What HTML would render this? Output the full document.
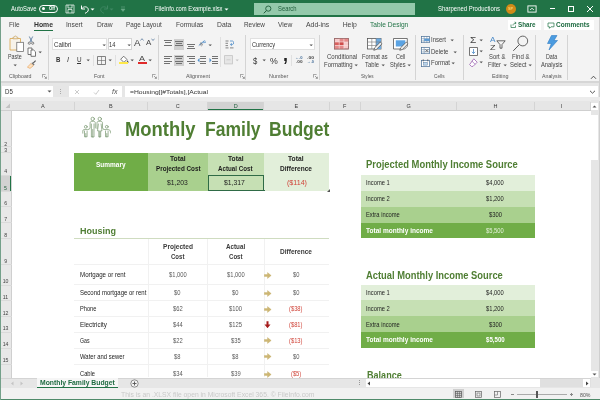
<!DOCTYPE html><html><head><meta charset="utf-8"><title>Excel</title><style>
html,body{margin:0;padding:0;}body{width:600px;height:400px;position:relative;overflow:hidden;background:#fff;font-family:"Liberation Sans", sans-serif;}
#r{position:absolute;left:0;top:0;width:600px;height:400px;overflow:hidden;will-change:transform;}
#r div,#r svg,#r span{position:absolute;}
#r span{white-space:nowrap;transform-origin:0 50%;line-height:12px;height:12px;}
</style></head><body><div id="r">
<div style="left:0px;top:0px;width:600px;height:17px;background:#217346;"></div>
<div style="left:0px;top:17px;width:600px;height:63.5px;background:#f3f3f3;"></div>
<div style="left:0px;top:80.5px;width:600px;height:2.0px;background:#d6d6d6;"></div>
<div style="left:0px;top:82.5px;width:600px;height:27.5px;background:#e6e6e6;"></div>
<div style="left:0px;top:110px;width:600px;height:267.5px;background:#fff;"></div>
<div style="left:0px;top:110px;width:11.5px;height:267.5px;background:#e8e8e8;"></div>
<div style="left:0px;top:377.5px;width:600px;height:10.5px;background:#e6e6e6;"></div>
<div style="left:0px;top:388px;width:600px;height:12px;background:#f1f1f1;"></div>
<div style="left:0px;top:17px;width:1px;height:383px;background:#74a08a;"></div>
<div style="left:599px;top:17px;width:1px;height:383px;background:#cfcfcf;"></div>
<div style="left:0px;top:399px;width:600px;height:1px;background:#4f8a6a;"></div>
<span style="left:11px;top:3px;font-size:6.5px;color:#fff;font-weight:400;transform:scaleX(0.9047);">AutoSave</span>
<div style="left:39px;top:4.5px;width:18.5px;height:8px;border:0.8px solid #fff;border-radius:5px;box-sizing:border-box"></div>
<div style="left:41.5px;top:6.8px;width:3.4px;height:3.4px;background:#fff;border-radius:50%"></div>
<span style="left:48.5px;top:2.6px;font-size:4.8px;color:#fff;font-weight:700;transform:scaleX(0.8649);">Off</span>
<svg style="left:65px;top:4px;" width="10" height="10" viewBox="0 0 10 10"><path d="M1 1h8v8h-8z M3 1v3h4v-3 M3 9v-3.5h4v3.500" fill="none" stroke="#fff" stroke-width="0.700"/></svg>
<svg style="left:80px;top:4px;" width="10" height="10" viewBox="0 0 10 10"><path d="M1.5 1.500v3.500h3.500 M1.8 4.800c1.500-3 6.500-2.500 6.500 1c0 1.800-1.500 2.700-3.300 3.500" fill="none" stroke="#fff" stroke-width="1"/></svg>
<svg style="left:90px;top:7.5px;" width="5" height="3" viewBox="0 0 5 3"><path d="M0.500 0.500l2 2l2-2z" fill="#fff"/></svg>
<svg style="left:99px;top:4px;" width="10" height="10" viewBox="0 0 10 10"><path d="M8.500 1.500v3.500h-3.500 M8.200 4.800c-1.500-3-6.500-2.500-6.500 1c0 1.800 1.500 2.700 3.300 3.500" fill="none" stroke="#3f8762" stroke-width="1"/></svg>
<svg style="left:109px;top:7.5px;" width="5" height="3" viewBox="0 0 5 3"><path d="M0.500 0.500l2 2l2-2z" fill="#3f8762"/></svg>
<svg style="left:120px;top:5.5px;" width="6" height="6" viewBox="0 0 6 6"><path d="M1 1h4 M1 3h4l-2 2.500z" fill="#6aa888" stroke="#6aa888" stroke-width="0.600"/></svg>
<span style="left:154.5px;top:3px;font-size:6.5px;color:#fff;font-weight:400;transform:scaleX(0.8940);">FileInfo.com Example.xlsx</span>
<svg style="left:223.5px;top:7.5px;" width="5" height="3" viewBox="0 0 5 3"><path d="M0.500 0.500l2 2l2-2z" fill="#fff"/></svg>
<div style="left:254px;top:3px;width:161px;height:11.5px;background:#94c9ab;"></div>
<svg style="left:262.5px;top:4.5px;" width="9" height="9" viewBox="0 0 9 9"><circle cx="5.300" cy="3.600" r="2.600" fill="none" stroke="#1e5c3a" stroke-width="0.900"/><path d="M3.500 5.500l-2.700 2.800" stroke="#1e5c3a" stroke-width="1"/></svg>
<span style="left:278px;top:3px;font-size:6.5px;color:#1e5c3a;font-weight:400;transform:scaleX(0.8976);">Search</span>
<span style="left:438px;top:3px;font-size:6.5px;color:#fff;font-weight:400;transform:scaleX(0.9126);">Sharpened Productions</span>
<div style="left:505.5px;top:3.6px;width:10px;height:10px;border-radius:50%;background:#cf8a17"></div>
<span style="left:508px;top:2.7px;font-size:3.8px;color:#f7d56a;font-weight:700;transform:scaleX(0.9846);">SP</span>
<svg style="left:527px;top:4.5px;" width="10" height="8" viewBox="0 0 10 8"><rect x="0.900" y="0.900" width="8.200" height="6.200" fill="none" stroke="#fff" stroke-width="0.900"/><path d="M3.200 5l1.800-1.800l1.800 1.800" fill="none" stroke="#fff" stroke-width="0.900"/></svg>
<div style="left:549.5px;top:8.2px;width:5.5px;height:0.9px;background:#fff;"></div>
<div style="left:567.500px;top:5.800px;width:6px;height:5.800px;border:0.800px solid #fff;box-sizing:border-box"></div>
<svg style="left:586px;top:5px;" width="8" height="8" viewBox="0 0 8 8"><path d="M1 1l6 6M7 1l-6 6" stroke="#fff" stroke-width="1"/></svg>
<span style="left:9px;top:19.2px;font-size:6.8px;color:#444;font-weight:400;transform:scaleX(0.9586);">File</span>
<span style="left:66px;top:19.2px;font-size:6.8px;color:#444;font-weight:400;transform:scaleX(0.9824);">Insert</span>
<span style="left:96.7px;top:19.2px;font-size:6.8px;color:#444;font-weight:400;transform:scaleX(0.9827);">Draw</span>
<span style="left:126px;top:19.2px;font-size:6.8px;color:#444;font-weight:400;transform:scaleX(0.9352);">Page Layout</span>
<span style="left:176px;top:19.2px;font-size:6.8px;color:#444;font-weight:400;transform:scaleX(0.9637);">Formulas</span>
<span style="left:216.7px;top:19.2px;font-size:6.8px;color:#444;font-weight:400;transform:scaleX(0.9959);">Data</span>
<span style="left:244px;top:19.2px;font-size:6.8px;color:#444;font-weight:400;transform:scaleX(0.9418);">Review</span>
<span style="left:278.3px;top:19.2px;font-size:6.8px;color:#444;font-weight:400;transform:scaleX(0.9857);">View</span>
<span style="left:306px;top:19.2px;font-size:6.8px;color:#444;font-weight:400;transform:scaleX(1.0110);">Add-ins</span>
<span style="left:342.7px;top:19.2px;font-size:6.8px;color:#444;font-weight:400;">Help</span>
<span style="left:34px;top:19.2px;font-size:6.8px;color:#333;font-weight:700;transform:scaleX(1.0058);">Home</span>
<div style="left:34px;top:30px;width:19px;height:1.3px;background:#217346;"></div>
<span style="left:370px;top:19.2px;font-size:6.8px;color:#217346;font-weight:400;transform:scaleX(0.9746);">Table Design</span>
<div style="left:507.5px;top:19.5px;width:33.0px;height:10.5px;background:#fff;"></div>
<div style="left:543.5px;top:19.5px;width:50.5px;height:10.5px;background:#fff;"></div>
<svg style="left:509.5px;top:21px;" width="7" height="7" viewBox="0 0 7 7"><path d="M1 3.500v3h4.500v-2 M3 4.500c0-2 1.500-2.500 3-2.500 M4.800 0.800l1.400 1.200l-1.400 1.200" fill="none" stroke="#217346" stroke-width="0.700"/></svg>
<span style="left:518px;top:19px;font-size:6.8px;color:#1e6b41;font-weight:700;transform:scaleX(0.9264);">Share</span>
<svg style="left:546.5px;top:21.5px;" width="8" height="7" viewBox="0 0 8 7"><path d="M1 1h6v3.800h-3l-1.500 1.500v-1.500h-1.500z" fill="none" stroke="#217346" stroke-width="0.700"/></svg>
<span style="left:556px;top:19px;font-size:6.8px;color:#1e6b41;font-weight:700;transform:scaleX(0.9537);">Comments</span>
<div style="left:2px;top:86.4px;width:51.4px;height:10.2px;background:#fff;"></div>
<span style="left:4.5px;top:85.6px;font-size:6.6px;color:#333;font-weight:400;transform:scaleX(0.9244);">D5</span>
<svg style="left:46.5px;top:90px;" width="5" height="3" viewBox="0 0 5 3"><path d="M0.500 0.500l2 2l2-2z" fill="#555"/></svg>
<div style="left:60.3px;top:89px;width:0.8px;height:0.8px;background:#aaa;"></div>
<div style="left:60.3px;top:91px;width:0.8px;height:0.8px;background:#aaa;"></div>
<div style="left:60.3px;top:93px;width:0.8px;height:0.8px;background:#aaa;"></div>
<div style="left:69px;top:86.4px;width:53px;height:10.2px;background:#fff;"></div>
<svg style="left:74px;top:88.5px;" width="6" height="6" viewBox="0 0 6 6"><path d="M1 1l4 4M5 1l-4 4" stroke="#b5b5b5" stroke-width="0.700"/></svg>
<svg style="left:92.5px;top:88.5px;" width="7" height="6" viewBox="0 0 7 6"><path d="M1 3.500l1.800 1.800l3.200-4.300" fill="none" stroke="#b5b5b5" stroke-width="0.700"/></svg>
<span style="left:111.5px;top:85.5px;font-size:6.5px;color:#555;font-weight:400;transform:scaleX(1.0864);font-style:italic;font-family:"Liberation Serif",serif;">fx</span>
<div style="left:125px;top:86.4px;width:473px;height:10.2px;background:#fff;"></div>
<span style="left:130px;top:85.6px;font-size:6.2px;color:#333;font-weight:400;transform:scaleX(1.0876);">=Housing[[#Totals],[Actual</span>
<svg style="left:588.5px;top:89.5px;" width="7" height="4" viewBox="0 0 7 4"><path d="M1 0.800l2.500 2.400l2.500-2.400" fill="none" stroke="#444" stroke-width="0.900"/></svg>
<div style="left:0px;top:96.6px;width:600px;height:4.7px;background:#ececec;"></div>
<div style="left:207.5px;top:101.5px;width:56.0px;height:8.5px;background:#d2d2d2;"></div>
<div style="left:207.5px;top:108.7px;width:56.0px;height:1.3px;background:#217346;"></div>
<span style="left:41.05px;top:100px;font-size:5.5px;color:#3a3a3a;font-weight:400;">A</span>
<div style="left:73.7px;top:102px;width:0.6px;height:7.5px;background:#d4d4d4;"></div>
<span style="left:109.05px;top:100px;font-size:5.5px;color:#3a3a3a;font-weight:400;">B</span>
<div style="left:147.2px;top:102px;width:0.6px;height:7.5px;background:#d4d4d4;"></div>
<span style="left:175.8px;top:100px;font-size:5.5px;color:#3a3a3a;font-weight:400;">C</span>
<div style="left:207.2px;top:102px;width:0.6px;height:7.5px;background:#d4d4d4;"></div>
<span style="left:233.8px;top:100px;font-size:5.5px;color:#1e5c3a;font-weight:400;">D</span>
<div style="left:263.2px;top:102px;width:0.6px;height:7.5px;background:#d4d4d4;"></div>
<span style="left:294.45px;top:100px;font-size:5.5px;color:#3a3a3a;font-weight:400;">E</span>
<div style="left:328.5px;top:102px;width:0.6px;height:7.5px;background:#d4d4d4;"></div>
<span style="left:342.95px;top:100px;font-size:5.5px;color:#3a3a3a;font-weight:400;">F</span>
<div style="left:360.2px;top:102px;width:0.6px;height:7.5px;background:#d4d4d4;"></div>
<span style="left:406.55px;top:100px;font-size:5.5px;color:#3a3a3a;font-weight:400;">G</span>
<div style="left:455.7px;top:102px;width:0.6px;height:7.5px;background:#d4d4d4;"></div>
<span style="left:493.55px;top:100px;font-size:5.5px;color:#3a3a3a;font-weight:400;">H</span>
<div style="left:534.2px;top:102px;width:0.6px;height:7.5px;background:#d4d4d4;"></div>
<span style="left:560.8px;top:100px;font-size:5.5px;color:#3a3a3a;font-weight:400;">I</span>
<div style="left:590.2px;top:102px;width:0.6px;height:7.5px;background:#d4d4d4;"></div>
<svg style="left:5px;top:103px;" width="6" height="6" viewBox="0 0 6 6"><path d="M5 0.500v4.500h-4.500z" fill="#c2c2c2"/></svg>
<div style="left:0px;top:109.6px;width:590.5px;height:0.6px;background:#cfcfcf;"></div>
<div style="left:11.2px;top:110px;width:0.6px;height:267.5px;background:#cfcfcf;"></div>
<span style="left:4.1499999999999995px;top:137.8px;font-size:5.2px;color:#444;font-weight:400;">2</span>
<span style="left:4.1499999999999995px;top:143.8px;font-size:5.2px;color:#444;font-weight:400;">3</span>
<span style="left:4.1499999999999995px;top:165px;font-size:5.2px;color:#444;font-weight:400;">4</span>
<span style="left:4.1499999999999995px;top:197.3px;font-size:5.2px;color:#444;font-weight:400;">6</span>
<span style="left:4.1499999999999995px;top:212.5px;font-size:5.2px;color:#444;font-weight:400;">7</span>
<span style="left:4.1499999999999995px;top:229px;font-size:5.2px;color:#444;font-weight:400;">8</span>
<span style="left:4.1499999999999995px;top:254.7px;font-size:5.2px;color:#444;font-weight:400;">9</span>
<span style="left:2.6999999999999997px;top:275px;font-size:5.2px;color:#444;font-weight:400;">10</span>
<span style="left:2.6999999999999997px;top:291px;font-size:5.2px;color:#444;font-weight:400;">11</span>
<span style="left:2.6999999999999997px;top:306.5px;font-size:5.2px;color:#444;font-weight:400;">12</span>
<span style="left:2.6999999999999997px;top:322.3px;font-size:5.2px;color:#444;font-weight:400;">13</span>
<span style="left:2.6999999999999997px;top:338px;font-size:5.2px;color:#444;font-weight:400;">14</span>
<span style="left:2.6999999999999997px;top:354px;font-size:5.2px;color:#444;font-weight:400;">15</span>
<div style="left:1px;top:175px;width:10.5px;height:16px;background:#d2d2d2;"></div>
<div style="left:10.4px;top:175px;width:1.1px;height:16px;background:#217346;"></div>
<span style="left:4.1px;top:181.5px;font-size:5.2px;color:#1e5c3a;font-weight:400;">5</span>
<div style="left:1px;top:145.75px;width:10.5px;height:0.5px;background:#dadada;"></div>
<div style="left:1px;top:152.25px;width:10.5px;height:0.5px;background:#dadada;"></div>
<div style="left:1px;top:174.75px;width:10.5px;height:0.5px;background:#dadada;"></div>
<div style="left:1px;top:190.75px;width:10.5px;height:0.5px;background:#dadada;"></div>
<div style="left:1px;top:206.25px;width:10.5px;height:0.5px;background:#dadada;"></div>
<div style="left:1px;top:221.75px;width:10.5px;height:0.5px;background:#dadada;"></div>
<div style="left:1px;top:238.25px;width:10.5px;height:0.5px;background:#dadada;"></div>
<div style="left:1px;top:263.75px;width:10.5px;height:0.5px;background:#dadada;"></div>
<div style="left:1px;top:284.75px;width:10.5px;height:0.5px;background:#dadada;"></div>
<div style="left:1px;top:300.45px;width:10.5px;height:0.5px;background:#dadada;"></div>
<div style="left:1px;top:316.25px;width:10.5px;height:0.5px;background:#dadada;"></div>
<div style="left:1px;top:332.25px;width:10.5px;height:0.5px;background:#dadada;"></div>
<div style="left:1px;top:348.05px;width:10.5px;height:0.5px;background:#dadada;"></div>
<div style="left:1px;top:364.05px;width:10.5px;height:0.5px;background:#dadada;"></div>
<div style="left:590.5px;top:100px;width:8.0px;height:277.5px;background:#e6e6e6;"></div>
<div style="left:591px;top:115px;width:6.7px;height:45px;background:#fff;"></div>
<div style="left:591px;top:103px;width:6.7px;height:6.6px;background:#fff;"></div>
<svg style="left:592.3px;top:104.8px;" width="5" height="3" viewBox="0 0 5 3"><path d="M0.500 2.500l2-2l2 2z" fill="#555"/></svg>
<div style="left:591px;top:370.5px;width:6.7px;height:6.5px;background:#fff;"></div>
<svg style="left:592.3px;top:372.5px;" width="5" height="3" viewBox="0 0 5 3"><path d="M0.500 0.500l2 2l2-2z" fill="#555"/></svg>
<span style="left:124.7px;top:122.8px;font-size:20.6px;color:#4f7e33;font-weight:700;transform:scaleX(0.8944);">Monthly</span>
<span style="left:205.3px;top:122.8px;font-size:20.6px;color:#4f7e33;font-weight:700;transform:scaleX(0.8506);">Family</span>
<span style="left:268.6px;top:122.8px;font-size:20.6px;color:#4f7e33;font-weight:700;transform:scaleX(0.8516);">Budget</span>
<svg style="left:82px;top:115.5px;" width="29" height="22" viewBox="0 0 29 22"><g fill="none" stroke="#6a8c62" stroke-width="0.650" stroke-linecap="round" stroke-linejoin="round">
<circle cx="10.700" cy="2.900" r="1.700"/><path d="M7.200 13.200l0.900-1.200v-4.800c0-1.300 0.700-1.900 1.900-1.900h1.400c1.200 0 1.900 0.600 1.900 1.900v4.800 M9.400 8v13h1.300v-7.500 M12 8v13h-1.300"/>
<circle cx="17.750" cy="2.900" r="1.700"/><path d="M15 12.500v-5.300c0-1.300 0.600-1.900 1.800-1.900h1.900c1.200 0 1.800 0.600 1.800 1.900v4.800l0.900 1.200 M16.400 8l-0.900 6.800h1.300v6.200h0.950v-6 M19.100 8l0.900 6.800h-1.300v6.200h-0.950"/>
<circle cx="3.800" cy="10.800" r="1.400"/><path d="M6.900 13.200l-1.200 0.400h-3.600c-0.900 0-1.300 0.500-1.300 1.300v2.300 M2.500 15v5.800h1.300v-3.300 M5.100 15v5.800h-1.300"/>
<circle cx="24.800" cy="10.800" r="1.400"/><path d="M21.700 13.200l1.200 0.400h3.600c0.900 0 1.400 0.500 1.700 1.300l0.700 2.300 M23.500 15v5.800h1.300v-3.300 M26.100 15v5.800h-1.300"/>
</g></svg>
<div style="left:73.8px;top:153.2px;width:74.2px;height:37.6px;background:#70ad47;"></div>
<div style="left:147.5px;top:153.2px;width:60.0px;height:37.6px;background:#a9d08e;"></div>
<div style="left:207.5px;top:153.2px;width:56.3px;height:37.6px;background:#c6e0b4;"></div>
<div style="left:263.8px;top:153.2px;width:65.2px;height:37.6px;background:#e2efda;"></div>
<span style="left:95.8px;top:158.9px;font-size:7.2px;color:#fff;font-weight:700;transform:scaleX(0.9034);">Summary</span>
<span style="left:169.8px;top:153.3px;font-size:7.2px;color:#1c1c1c;font-weight:700;transform:scaleX(0.9315);">Total</span>
<span style="left:155.5px;top:163px;font-size:7.2px;color:#1c1c1c;font-weight:700;transform:scaleX(0.8771);">Projected Cost</span>
<span style="left:166.5px;top:177.4px;font-size:7.4px;color:#222;font-weight:400;transform:scaleX(0.9200);">$1,203</span>
<span style="left:227.5px;top:153.3px;font-size:7.2px;color:#1c1c1c;font-weight:700;transform:scaleX(0.9315);">Total</span>
<span style="left:218px;top:163px;font-size:7.2px;color:#1c1c1c;font-weight:700;transform:scaleX(0.8638);">Actual Cost</span>
<span style="left:224.3px;top:177.4px;font-size:7.4px;color:#222;font-weight:400;transform:scaleX(0.9244);">$1,317</span>
<span style="left:287.8px;top:153.3px;font-size:7.2px;color:#1c1c1c;font-weight:700;transform:scaleX(0.9315);">Total</span>
<span style="left:280px;top:163px;font-size:7.2px;color:#1c1c1c;font-weight:700;transform:scaleX(0.9102);">Difference</span>
<span style="left:286.5px;top:177.4px;font-size:7.4px;color:#d0453a;font-weight:400;transform:scaleX(0.9602);">($114)</span>
<div style="left:207.500px;top:175px;width:56.500px;height:16px;border:1px solid #2f6b46;box-sizing:border-box"></div>
<div style="left:262.8px;top:189.7px;width:1.8px;height:1.8px;background:#2f6b46;"></div>
<svg style="left:326.5px;top:188.5px;" width="3" height="3" viewBox="0 0 3 3"><path d="M3 0v3h-3z" fill="#555"/></svg>
<span style="left:80px;top:225px;font-size:9.8px;color:#4f7e33;font-weight:700;transform:scaleX(0.9187);">Housing</span>
<div style="left:74px;top:237.8px;width:255px;height:0.9px;background:#cfdcc0;"></div>
<span style="left:162.5px;top:241.3px;font-size:6.8px;color:#3a3a3a;font-weight:700;transform:scaleX(0.9682);">Projected</span>
<span style="left:170.8px;top:250.7px;font-size:6.8px;color:#3a3a3a;font-weight:700;transform:scaleX(0.8869);">Cost</span>
<span style="left:225.8px;top:241.3px;font-size:6.8px;color:#3a3a3a;font-weight:700;transform:scaleX(0.9239);">Actual</span>
<span style="left:229px;top:250.7px;font-size:6.8px;color:#3a3a3a;font-weight:700;transform:scaleX(0.8935);">Cost</span>
<span style="left:280px;top:245.8px;font-size:6.8px;color:#3a3a3a;font-weight:700;transform:scaleX(0.9624);">Difference</span>
<div style="left:74px;top:263.9px;width:255px;height:0.6px;background:#f1f1f1;"></div>
<div style="left:74px;top:284.3px;width:255px;height:0.6px;background:#f1f1f1;"></div>
<div style="left:74px;top:300.0px;width:255px;height:0.6px;background:#f1f1f1;"></div>
<div style="left:74px;top:316.0px;width:255px;height:0.6px;background:#f1f1f1;"></div>
<div style="left:74px;top:332.0px;width:255px;height:0.6px;background:#f1f1f1;"></div>
<div style="left:74px;top:348.0px;width:255px;height:0.6px;background:#f1f1f1;"></div>
<div style="left:74px;top:364.0px;width:255px;height:0.6px;background:#f1f1f1;"></div>
<div style="left:147.5px;top:238.7px;width:0.6px;height:138.8px;background:#f1f1f1;"></div>
<div style="left:207.0px;top:238.7px;width:0.6px;height:138.8px;background:#f1f1f1;"></div>
<div style="left:263.5px;top:238.7px;width:0.6px;height:138.8px;background:#f1f1f1;"></div>
<span style="left:79.5px;top:269px;font-size:6.7px;color:#222;font-weight:400;transform:scaleX(0.9201);">Mortgage or rent</span>
<span style="left:168.75px;top:269px;font-size:6.7px;color:#5a5a5a;font-weight:400;transform:scaleX(0.8647);">$1,000</span>
<span style="left:226.55px;top:269px;font-size:6.7px;color:#5a5a5a;font-weight:400;transform:scaleX(0.8647);">$1,000</span>
<span style="left:292.575px;top:269px;font-size:6.7px;color:#5a5a5a;font-weight:400;transform:scaleX(0.8654);">$0</span>
<svg style="left:264.3px;top:271.5px;" width="7.5" height="7" viewBox="0 0 7.5 7"><path d="M0.300 2.500h3.200v-2l3.700 3l-3.700 3v-2h-3.200z" fill="#cdb673" stroke="#bfa55c" stroke-width="0.300"/></svg>
<span style="left:79.5px;top:287px;font-size:6.7px;color:#222;font-weight:400;transform:scaleX(0.8961);">Second mortgage or rent</span>
<span style="left:174.375px;top:287px;font-size:6.7px;color:#5a5a5a;font-weight:400;transform:scaleX(0.8654);">$0</span>
<span style="left:232.175px;top:287px;font-size:6.7px;color:#5a5a5a;font-weight:400;transform:scaleX(0.8654);">$0</span>
<span style="left:292.575px;top:287px;font-size:6.7px;color:#5a5a5a;font-weight:400;transform:scaleX(0.8654);">$0</span>
<svg style="left:264.3px;top:289.5px;" width="7.5" height="7" viewBox="0 0 7.5 7"><path d="M0.300 2.500h3.200v-2l3.700 3l-3.700 3v-2h-3.200z" fill="#cdb673" stroke="#bfa55c" stroke-width="0.300"/></svg>
<span style="left:79.5px;top:303px;font-size:6.7px;color:#222;font-weight:400;transform:scaleX(0.8426);">Phone</span>
<span style="left:172.75px;top:303px;font-size:6.7px;color:#5a5a5a;font-weight:400;transform:scaleX(0.8683);">$62</span>
<span style="left:228.925px;top:303px;font-size:6.7px;color:#5a5a5a;font-weight:400;transform:scaleX(0.8697);">$100</span>
<span style="left:289.05px;top:303px;font-size:6.7px;color:#d0453a;font-weight:400;transform:scaleX(0.8640);">($38)</span>
<svg style="left:264.3px;top:305.5px;" width="7.5" height="7" viewBox="0 0 7.5 7"><path d="M0.300 2.500h3.200v-2l3.700 3l-3.700 3v-2h-3.200z" fill="#cdb673" stroke="#bfa55c" stroke-width="0.300"/></svg>
<span style="left:79.5px;top:318.7px;font-size:6.7px;color:#222;font-weight:400;transform:scaleX(0.9432);">Electricity</span>
<span style="left:172.75px;top:318.7px;font-size:6.7px;color:#5a5a5a;font-weight:400;transform:scaleX(0.8683);">$44</span>
<span style="left:228.925px;top:318.7px;font-size:6.7px;color:#5a5a5a;font-weight:400;transform:scaleX(0.8697);">$125</span>
<span style="left:289.05px;top:318.7px;font-size:6.7px;color:#d0453a;font-weight:400;transform:scaleX(0.8640);">($81)</span>
<svg style="left:264.3px;top:321.2px;" width="7.5" height="7" viewBox="0 0 7.5 7"><path d="M2.500 0.300v3.200h-2l3 3.700l3-3.700h-2v-3.200z" fill="#a61c1c"/></svg>
<span style="left:79.5px;top:334.5px;font-size:6.7px;color:#222;font-weight:400;transform:scaleX(0.7745);">Gas</span>
<span style="left:172.75px;top:334.5px;font-size:6.7px;color:#5a5a5a;font-weight:400;transform:scaleX(0.8683);">$22</span>
<span style="left:230.55px;top:334.5px;font-size:6.7px;color:#5a5a5a;font-weight:400;transform:scaleX(0.8683);">$35</span>
<span style="left:289.05px;top:334.5px;font-size:6.7px;color:#d0453a;font-weight:400;transform:scaleX(0.8640);">($13)</span>
<svg style="left:264.3px;top:337.0px;" width="7.5" height="7" viewBox="0 0 7.5 7"><path d="M0.300 2.500h3.200v-2l3.700 3l-3.700 3v-2h-3.200z" fill="#cdb673" stroke="#bfa55c" stroke-width="0.300"/></svg>
<span style="left:79.5px;top:350.6px;font-size:6.7px;color:#222;font-weight:400;transform:scaleX(0.8845);">Water and sewer</span>
<span style="left:174.375px;top:350.6px;font-size:6.7px;color:#5a5a5a;font-weight:400;transform:scaleX(0.8654);">$8</span>
<span style="left:232.175px;top:350.6px;font-size:6.7px;color:#5a5a5a;font-weight:400;transform:scaleX(0.8654);">$8</span>
<span style="left:292.575px;top:350.6px;font-size:6.7px;color:#5a5a5a;font-weight:400;transform:scaleX(0.8654);">$0</span>
<svg style="left:264.3px;top:353.1px;" width="7.5" height="7" viewBox="0 0 7.5 7"><path d="M0.300 2.500h3.200v-2l3.700 3l-3.700 3v-2h-3.200z" fill="#cdb673" stroke="#bfa55c" stroke-width="0.300"/></svg>
<span style="left:79.5px;top:368.2px;font-size:6.7px;color:#222;font-weight:400;transform:scaleX(0.8579);">Cable</span>
<span style="left:172.75px;top:368.2px;font-size:6.7px;color:#5a5a5a;font-weight:400;transform:scaleX(0.8683);">$34</span>
<span style="left:230.55px;top:368.2px;font-size:6.7px;color:#5a5a5a;font-weight:400;transform:scaleX(0.8683);">$39</span>
<span style="left:290.675px;top:368.2px;font-size:6.7px;color:#d0453a;font-weight:400;transform:scaleX(0.8609);">($5)</span>
<svg style="left:264.3px;top:370.7px;" width="7.5" height="7" viewBox="0 0 7.5 7"><path d="M0.300 2.500h3.200v-2l3.700 3l-3.700 3v-2h-3.200z" fill="#cdb673" stroke="#bfa55c" stroke-width="0.300"/></svg>
<span style="left:366.2px;top:157.9px;font-size:10.6px;color:#4f7e33;font-weight:700;transform:scaleX(0.8892);">Projected Monthly Income Source</span>
<div style="left:360.5px;top:175px;width:174.0px;height:16.4px;background:#e2efda;"></div>
<div style="left:360.5px;top:190.8px;width:174.0px;height:16.5px;background:#c6e0b4;"></div>
<div style="left:360.5px;top:206.7px;width:174.0px;height:16.4px;background:#a9d08e;"></div>
<div style="left:360.5px;top:222.5px;width:174.0px;height:15.8px;background:#70ad47;"></div>
<span style="left:366.2px;top:177.2px;font-size:6.7px;color:#1f1f1f;font-weight:400;transform:scaleX(0.8650);">Income 1</span>
<span style="left:486.15px;top:177.2px;font-size:6.7px;color:#1f1f1f;font-weight:400;transform:scaleX(0.8647);">$4,000</span>
<span style="left:366.2px;top:193.05px;font-size:6.7px;color:#1f1f1f;font-weight:400;transform:scaleX(0.8650);">Income 2</span>
<span style="left:486.15px;top:193.05px;font-size:6.7px;color:#1f1f1f;font-weight:400;transform:scaleX(0.8647);">$1,200</span>
<span style="left:366.2px;top:208.9px;font-size:6.7px;color:#1f1f1f;font-weight:400;transform:scaleX(0.8660);">Extra income</span>
<span style="left:488.525px;top:208.9px;font-size:6.7px;color:#1f1f1f;font-weight:400;transform:scaleX(0.8697);">$300</span>
<span style="left:366.2px;top:224.7px;font-size:7px;color:#fff;font-weight:700;transform:scaleX(0.9328);">Total monthly income</span>
<span style="left:486.15px;top:224.7px;font-size:6.7px;color:#e4f1da;font-weight:400;transform:scaleX(0.8647);">$5,500</span>
<span style="left:366.2px;top:268.9px;font-size:10.6px;color:#4f7e33;font-weight:700;transform:scaleX(0.8836);">Actual Monthly Income Source</span>
<div style="left:360.5px;top:284.6px;width:174.0px;height:16.4px;background:#e2efda;"></div>
<div style="left:360.5px;top:300.40000000000003px;width:174.0px;height:16.5px;background:#c6e0b4;"></div>
<div style="left:360.5px;top:316.3px;width:174.0px;height:16.4px;background:#a9d08e;"></div>
<div style="left:360.5px;top:332.1px;width:174.0px;height:15.8px;background:#70ad47;"></div>
<span style="left:366.2px;top:286.8px;font-size:6.7px;color:#1f1f1f;font-weight:400;transform:scaleX(0.8650);">Income 1</span>
<span style="left:486.15px;top:286.8px;font-size:6.7px;color:#1f1f1f;font-weight:400;transform:scaleX(0.8647);">$4,000</span>
<span style="left:366.2px;top:302.65px;font-size:6.7px;color:#1f1f1f;font-weight:400;transform:scaleX(0.8650);">Income 2</span>
<span style="left:486.15px;top:302.65px;font-size:6.7px;color:#1f1f1f;font-weight:400;transform:scaleX(0.8647);">$1,200</span>
<span style="left:366.2px;top:318.5px;font-size:6.7px;color:#1f1f1f;font-weight:400;transform:scaleX(0.8660);">Extra income</span>
<span style="left:488.525px;top:318.5px;font-size:6.7px;color:#1f1f1f;font-weight:400;transform:scaleX(0.8697);">$300</span>
<span style="left:366.2px;top:334.3px;font-size:7px;color:#fff;font-weight:700;transform:scaleX(0.9328);">Total monthly income</span>
<span style="left:485.65px;top:334.3px;font-size:6.7px;color:#fff;font-weight:700;transform:scaleX(0.9136);">$5,500</span>
<span style="left:367px;top:369.2px;font-size:10.6px;color:#4f7e33;font-weight:700;transform:scaleX(0.8563);">Balance</span>
<div style="left:0px;top:377.8px;width:600px;height:10.5px;background:#e6e6e6;"></div>
<div style="left:0px;top:377.5px;width:590.5px;height:0.6px;background:#d4d4d4;"></div>
<div style="left:36.5px;top:378.1px;width:81.0px;height:10.2px;background:#f6f6f6;"></div>
<div style="left:36.5px;top:386.8px;width:81.0px;height:1.5px;background:#217346;"></div>
<span style="left:40px;top:376.6px;font-size:6.8px;color:#1e6b41;font-weight:700;">Monthly Family Budget</span>
<svg style="left:10px;top:380.5px;" width="5" height="5" viewBox="0 0 5 5"><path d="M3.500 0.500l-2.500 2l2.500 2z" fill="#c4c4c4"/></svg>
<svg style="left:18.5px;top:380.5px;" width="5" height="5" viewBox="0 0 5 5"><path d="M1.500 0.500l2.500 2l-2.500 2z" fill="#c4c4c4"/></svg>
<svg style="left:129.5px;top:378.5px;" width="9" height="9" viewBox="0 0 9 9"><circle cx="4.500" cy="4.500" r="3.700" fill="#f3f3f3" stroke="#666" stroke-width="0.700"/><path d="M2.500 4.500h4M4.500 2.500v4" stroke="#555" stroke-width="0.900"/></svg>
<div style="left:358.6px;top:380.3px;width:0.8px;height:0.8px;background:#999;"></div>
<div style="left:358.6px;top:382.3px;width:0.8px;height:0.8px;background:#999;"></div>
<div style="left:358.6px;top:384.3px;width:0.8px;height:0.8px;background:#999;"></div>
<div style="left:365.5px;top:378.8px;width:225.0px;height:8.7px;background:#e0e0e0;"></div>
<div style="left:365.5px;top:378.8px;width:7.0px;height:8.7px;background:#fff;"></div>
<svg style="left:367px;top:380.6px;" width="4" height="5" viewBox="0 0 4 5"><path d="M3 0.500l-2.500 2l2.500 2z" fill="#444"/></svg>
<div style="left:373px;top:378.8px;width:167px;height:8.7px;background:#fff;"></div>
<div style="left:582.5px;top:378.8px;width:7.5px;height:8.7px;background:#fff;"></div>
<svg style="left:584.5px;top:380.6px;" width="4" height="5" viewBox="0 0 4 5"><path d="M1 0.500l2.500 2l-2.500 2z" fill="#444"/></svg>
<div style="left:590.5px;top:377.5px;width:8.0px;height:10.8px;background:#e6e6e6;"></div>
<div style="left:0px;top:388.3px;width:600px;height:11.7px;background:#f1f1f1;"></div>
<div style="left:0px;top:399px;width:600px;height:1px;background:#4f8a6a;"></div>
<div style="left:0px;top:17px;width:1px;height:383px;background:#74a08a;"></div>
<span style="left:120.5px;top:388.6px;font-size:6.6px;color:#c9c9c9;font-weight:400;transform:scaleX(1.0287);">This is an .XLSX file open in Microsoft Excel 365. © FileInfo.com</span>
<div style="left:452.5px;top:389.3px;width:11.0px;height:9.2px;background:#cfcfcf;"></div>
<svg style="left:454.5px;top:390.5px;" width="7" height="7" viewBox="0 0 7 7"><rect x="0.500" y="0.500" width="6" height="6" fill="none" stroke="#555" stroke-width="0.700"/><path d="M0.500 2.500h6M0.500 4.500h6M2.500 0.500v6M4.500 0.500v6" stroke="#555" stroke-width="0.500"/></svg>
<svg style="left:474.5px;top:390.5px;" width="7" height="7" viewBox="0 0 7 7"><rect x="0.500" y="0.500" width="6" height="6" fill="none" stroke="#666" stroke-width="0.700"/><rect x="2" y="2" width="3" height="3" fill="none" stroke="#666" stroke-width="0.600"/></svg>
<svg style="left:494px;top:390.5px;" width="7" height="7" viewBox="0 0 7 7"><rect x="0.500" y="0.500" width="6" height="6" fill="none" stroke="#666" stroke-width="0.700"/><path d="M0.500 4h3v-3.500" fill="none" stroke="#666" stroke-width="0.600"/></svg>
<div style="left:511px;top:394.2px;width:3px;height:0.7px;background:#888;"></div>
<div style="left:517px;top:394.3px;width:50px;height:0.5px;background:#aaa;"></div>
<div style="left:536.3px;top:391.3px;width:1.7px;height:6.5px;background:#555;"></div>
<div style="left:570px;top:394.2px;width:3.4px;height:0.7px;background:#888;"></div>
<div style="left:571.4px;top:392.8px;width:0.6px;height:3.4px;background:#888;"></div>
<span style="left:580px;top:388.6px;font-size:5.4px;color:#555;font-weight:400;transform:scaleX(0.9725);">80%</span>
<div style="left:48.15px;top:34.5px;width:0.7px;height:45.0px;background:#d4d4d4;"></div>
<div style="left:157.65px;top:34.5px;width:0.7px;height:45.0px;background:#d4d4d4;"></div>
<div style="left:245.15px;top:34.5px;width:0.7px;height:45.0px;background:#d4d4d4;"></div>
<div style="left:319.15px;top:34.5px;width:0.7px;height:45.0px;background:#d4d4d4;"></div>
<div style="left:415.15px;top:34.5px;width:0.7px;height:45.0px;background:#d4d4d4;"></div>
<div style="left:463.34999999999997px;top:34.5px;width:0.7px;height:45.0px;background:#d4d4d4;"></div>
<div style="left:534.9499999999999px;top:34.5px;width:0.7px;height:45.0px;background:#d4d4d4;"></div>
<div style="left:566.9499999999999px;top:34.5px;width:0.7px;height:45.0px;background:#d4d4d4;"></div>
<div style="left:220px;top:37px;width:0.6px;height:30px;background:#e0e0e0;"></div>
<svg style="left:8.5px;top:35px;" width="16" height="17" viewBox="0 0 16 17"><path d="M1 3.500h10.500v11.500h-10.500z" fill="#f7f3ea" stroke="#dcae5c" stroke-width="0.900"/>
<path d="M4 3.800v-1.600h1.200c0-1.600 2.400-1.600 2.400 0h1.200v1.600z" fill="#f3f3f3" stroke="#c9a25c" stroke-width="0.700"/>
<rect x="7.800" y="7.300" width="6.800" height="9.200" fill="#fff" stroke="#686868" stroke-width="0.750"/></svg>
<span style="left:8.3px;top:51px;font-size:6.4px;color:#444;font-weight:400;transform:scaleX(0.8382);">Paste</span>
<svg style="left:12.5px;top:63.8px;" width="4.4" height="2.8" viewBox="0 0 4.4 2.8"><path d="M0.500 0.500l1.700 1.700l1.700-1.700z" fill="#555"/></svg>
<svg style="left:26.5px;top:35.5px;" width="8" height="9" viewBox="0 0 8 9"><path d="M2.300 0.500l2.700 5.500 M5.700 0.500l-2.700 5.500" stroke="#4a6f96" stroke-width="0.800" fill="none"/><circle cx="2.300" cy="7.200" r="1.100" fill="none" stroke="#555" stroke-width="0.700"/><circle cx="5.700" cy="7.200" r="1.100" fill="none" stroke="#555" stroke-width="0.700"/></svg>
<svg style="left:26.5px;top:46.5px;" width="10" height="10" viewBox="0 0 10 10"><path d="M1 1h4v6.500h-4z" fill="#fff" stroke="#555" stroke-width="0.800"/><path d="M4 3h2.700l1.800 1.800v4.500h-4.500z" fill="#fff" stroke="#555" stroke-width="0.800"/></svg>
<svg style="left:37.8px;top:51.099999999999994px;" width="4.4" height="2.8" viewBox="0 0 4.4 2.8"><path d="M0.500 0.500l1.700 1.700l1.700-1.700z" fill="#555"/></svg>
<svg style="left:26.5px;top:59.5px;" width="10" height="9" viewBox="0 0 10 9"><path d="M8.600 0.600l-2.400 2.600" stroke="#555" stroke-width="1.100"/><path d="M5.300 2.300l2.300 2.300l-1 0.900l-2.300-2.300z" fill="#777"/><path d="M4 3.500l2.300 2.300l-3.300 2.600l-2.600-1.300z" fill="#fbe2c4" stroke="#e69a4c" stroke-width="0.600"/></svg>
<span style="left:9px;top:70px;font-size:6.2px;color:#555;font-weight:400;transform:scaleX(0.8496);">Clipboard</span>
<svg style="left:41.8px;top:73.7px;" width="5" height="5" viewBox="0 0 5 5"><path d="M0.400 3.600v-3.200h3.200 M2 2l2.300 2.300 M4.400 2.700v1.700h-1.700" fill="none" stroke="#666" stroke-width="0.600"/></svg>
<div style="left:52px;top:38.4px;width:55px;height:11.6px;background:#fff;border:0.600px solid #e0e0e0;box-sizing:border-box;"></div>
<div style="left:108px;top:38.4px;width:24.3px;height:11.6px;background:#fff;border:0.600px solid #d4d4d4;box-sizing:border-box;"></div>
<span style="left:54px;top:38.7px;font-size:6.4px;color:#333;font-weight:400;transform:scaleX(0.9545);">Calibri</span>
<svg style="left:101.8px;top:43.599999999999994px;" width="4.4" height="2.8" viewBox="0 0 4.4 2.8"><path d="M0.500 0.500l1.700 1.700l1.700-1.700z" fill="#555"/></svg>
<span style="left:109.3px;top:38.7px;font-size:6.4px;color:#333;font-weight:400;transform:scaleX(0.8862);">14</span>
<svg style="left:127.3px;top:43.599999999999994px;" width="4.4" height="2.8" viewBox="0 0 4.4 2.8"><path d="M0.500 0.500l1.700 1.700l1.700-1.700z" fill="#555"/></svg>
<span style="left:134px;top:36.5px;font-size:9.4px;color:#444;font-weight:400;transform:scaleX(1.0374);">A</span>
<svg style="left:140px;top:37.5px;" width="4" height="3" viewBox="0 0 4 3"><path d="M0.500 2.500l1.500-1.800l1.500 1.800" fill="none" stroke="#4a6f96" stroke-width="0.700"/></svg>
<span style="left:146px;top:37.3px;font-size:8px;color:#444;font-weight:400;transform:scaleX(0.9918);">A</span>
<svg style="left:150.5px;top:37.5px;" width="4" height="3" viewBox="0 0 4 3"><path d="M0.500 0.700l1.500 1.800l1.500-1.800" fill="none" stroke="#4a6f96" stroke-width="0.700"/></svg>
<span style="left:55.8px;top:54.3px;font-size:6.8px;color:#333;font-weight:700;transform:scaleX(0.8940);">B</span>
<span style="left:67.3px;top:54.3px;font-size:6.8px;color:#333;font-weight:400;transform:scaleX(1.0579);font-style:italic;font-family:"Liberation Serif",serif;">I</span>
<span style="left:76.8px;top:54px;font-size:6.6px;color:#333;font-weight:400;transform:scaleX(0.9652);">U</span>
<div style="left:76.8px;top:63.3px;width:4.6px;height:0.6px;background:#333;"></div>
<svg style="left:86.0px;top:59.3px;" width="4.4" height="2.8" viewBox="0 0 4.4 2.8"><path d="M0.500 0.500l1.700 1.700l1.700-1.700z" fill="#555"/></svg>
<div style="left:93px;top:55px;width:0.5px;height:11px;background:#e0e0e0;"></div>
<svg style="left:96.5px;top:55.5px;" width="9" height="9" viewBox="0 0 9 9"><rect x="0.600" y="0.600" width="7.800" height="7.800" fill="none" stroke="#666" stroke-width="0.800"/><path d="M4.500 0.600v7.800M0.600 4.500h7.800" stroke="#666" stroke-width="0.600"/></svg>
<svg style="left:108.1px;top:59.3px;" width="4.4" height="2.8" viewBox="0 0 4.4 2.8"><path d="M0.500 0.500l1.700 1.700l1.700-1.700z" fill="#555"/></svg>
<div style="left:114.5px;top:55px;width:0.5px;height:11px;background:#e0e0e0;"></div>
<svg style="left:118.5px;top:54.5px;" width="10" height="10" viewBox="0 0 10 10"><path d="M4.700 1.200l3.200 3.200l-3 3l-3.200-3.200z" fill="#fff" stroke="#555" stroke-width="0.800"/><path d="M8.600 5.300c0.600 0.900 0.900 1.400 0.900 1.900a0.900 0.900 0 0 1-1.800 0c0-0.500 0.300-1 0.900-1.900z" fill="#555"/></svg>
<div style="left:118.5px;top:62.3px;width:9.0px;height:2.0px;background:#ffe94a;"></div>
<svg style="left:129.8px;top:59.3px;" width="4.4" height="2.8" viewBox="0 0 4.4 2.8"><path d="M0.500 0.500l1.700 1.700l1.700-1.700z" fill="#555"/></svg>
<span style="left:139px;top:52.6px;font-size:8px;color:#444;font-weight:400;transform:scaleX(1.1228);">A</span>
<div style="left:138px;top:62.3px;width:8.5px;height:2.0px;background:#e02b2b;"></div>
<svg style="left:148.3px;top:59.3px;" width="4.4" height="2.8" viewBox="0 0 4.4 2.8"><path d="M0.500 0.500l1.700 1.700l1.700-1.700z" fill="#555"/></svg>
<span style="left:94px;top:70px;font-size:6.2px;color:#555;font-weight:400;transform:scaleX(0.8474);">Font</span>
<svg style="left:151.7px;top:73.7px;" width="5" height="5" viewBox="0 0 5 5"><path d="M0.400 3.600v-3.200h3.200 M2 2l2.300 2.300 M4.400 2.700v1.700h-1.700" fill="none" stroke="#666" stroke-width="0.600"/></svg>
<div style="left:173.5px;top:38.5px;width:10.8px;height:11.2px;background:#cfcfcf;"></div>
<div style="left:173.5px;top:54.5px;width:10.8px;height:11.2px;background:#cfcfcf;"></div>
<div style="left:164.0px;top:40.3px;width:8.0px;height:0.6px;background:#727272;"></div>
<div style="left:165.0px;top:42.4px;width:6.0px;height:0.6px;background:#727272;"></div>
<div style="left:164.0px;top:44.5px;width:8.0px;height:0.6px;background:#727272;"></div>
<div style="left:175.0px;top:41.0px;width:8.0px;height:0.6px;background:#727272;"></div>
<div style="left:176.0px;top:43.1px;width:6.0px;height:0.6px;background:#727272;"></div>
<div style="left:175.0px;top:45.2px;width:8.0px;height:0.6px;background:#727272;"></div>
<div style="left:186.5px;top:43.8px;width:8.0px;height:0.6px;background:#727272;"></div>
<div style="left:187.5px;top:45.9px;width:6.0px;height:0.6px;background:#727272;"></div>
<div style="left:186.5px;top:48.0px;width:8.0px;height:0.6px;background:#727272;"></div>
<div style="left:164px;top:56.3px;width:8px;height:0.6px;background:#727272;"></div>
<div style="left:164px;top:58.4px;width:5.5px;height:0.6px;background:#727272;"></div>
<div style="left:164px;top:60.5px;width:8px;height:0.6px;background:#727272;"></div>
<div style="left:164px;top:62.599999999999994px;width:5.5px;height:0.6px;background:#727272;"></div>
<div style="left:175.0px;top:56.3px;width:8.0px;height:0.6px;background:#727272;"></div>
<div style="left:176.25px;top:58.4px;width:5.5px;height:0.6px;background:#727272;"></div>
<div style="left:175.0px;top:60.5px;width:8.0px;height:0.6px;background:#727272;"></div>
<div style="left:176.25px;top:62.599999999999994px;width:5.5px;height:0.6px;background:#727272;"></div>
<div style="left:186.5px;top:56.3px;width:8.0px;height:0.6px;background:#727272;"></div>
<div style="left:189.0px;top:58.4px;width:5.5px;height:0.6px;background:#727272;"></div>
<div style="left:186.5px;top:60.5px;width:8.0px;height:0.6px;background:#727272;"></div>
<div style="left:189.0px;top:62.599999999999994px;width:5.5px;height:0.6px;background:#727272;"></div>
<svg style="left:197.5px;top:39px;" width="10" height="9" viewBox="0 0 10 9"><path d="M0.800 6.500l5.200-4.500" stroke="#4a8ac8" stroke-width="0.900"/><path d="M6.500 1.200l1 2.300l-2.500 0.200" fill="none" stroke="#4a8ac8" stroke-width="0.700"/></svg>
<span style="left:198px;top:37.5px;font-size:5.4px;color:#555;font-weight:400;transform:scaleX(0.4468);transform-origin:50% 50%;rotate:-40deg;">ab</span>
<svg style="left:207.8px;top:43.599999999999994px;" width="4.4" height="2.8" viewBox="0 0 4.4 2.8"><path d="M0.500 0.500l1.700 1.700l1.700-1.700z" fill="#555"/></svg>
<div style="left:200px;top:56.3px;width:6px;height:0.6px;background:#727272;"></div>
<div style="left:200px;top:58.4px;width:6px;height:0.6px;background:#727272;"></div>
<div style="left:200px;top:60.5px;width:6px;height:0.6px;background:#727272;"></div>
<div style="left:200px;top:62.599999999999994px;width:6px;height:0.6px;background:#727272;"></div>
<svg style="left:197px;top:56.5px;" width="3" height="7" viewBox="0 0 3 7"><path d="M2.500 1l-2 2.300l2 2.300z" fill="#4a8ac8"/></svg>
<div style="left:212px;top:56.3px;width:6px;height:0.6px;background:#727272;"></div>
<div style="left:212px;top:58.4px;width:6px;height:0.6px;background:#727272;"></div>
<div style="left:212px;top:60.5px;width:6px;height:0.6px;background:#727272;"></div>
<div style="left:212px;top:62.599999999999994px;width:6px;height:0.6px;background:#727272;"></div>
<svg style="left:208.5px;top:56.5px;" width="3" height="7" viewBox="0 0 3 7"><path d="M0.500 1l2 2.300l-2 2.300z" fill="#4a8ac8"/></svg>
<svg style="left:224.5px;top:39.5px;" width="9" height="9" viewBox="0 0 9 9"><path d="M0.500 1h3M0.500 3.300h2.500M0.500 5.600h2.500M0.500 7.900h3" stroke="#555" stroke-width="0.700"/><path d="M5 1h2.500c1.500 0 1.500 3.500 0 3.500h-1.500" fill="none" stroke="#4a8ac8" stroke-width="0.800"/><path d="M6.800 3.200l-1.500 1.300l1.500 1.300" fill="none" stroke="#4a8ac8" stroke-width="0.800"/><path d="M5 7.900h3.500" stroke="#555" stroke-width="0.700"/></svg>
<svg style="left:223.5px;top:55px;" width="9" height="10" viewBox="0 0 9 10"><rect x="0.600" y="0.600" width="7.800" height="8.300" fill="#e6e6e6" stroke="#c4c4c4" stroke-width="0.800"/><path d="M2.500 4.800h4" stroke="#c4c4c4" stroke-width="0.700"/></svg>
<svg style="left:235.3px;top:59.3px;" width="4.4" height="2.8" viewBox="0 0 4.4 2.8"><path d="M0.500 0.500l1.700 1.700l1.700-1.700z" fill="#c4c4c4"/></svg>
<span style="left:185.5px;top:70px;font-size:6.2px;color:#555;font-weight:400;transform:scaleX(0.8722);">Alignment</span>
<svg style="left:239.5px;top:73.7px;" width="5" height="5" viewBox="0 0 5 5"><path d="M0.400 3.600v-3.200h3.200 M2 2l2.300 2.300 M4.400 2.700v1.700h-1.700" fill="none" stroke="#666" stroke-width="0.600"/></svg>
<div style="left:250px;top:38.4px;width:65px;height:11.6px;background:#fff;border:0.600px solid #e0e0e0;box-sizing:border-box;"></div>
<span style="left:251.5px;top:38.7px;font-size:6.4px;color:#333;font-weight:400;transform:scaleX(0.8867);">Currency</span>
<svg style="left:308.8px;top:43.599999999999994px;" width="4.4" height="2.8" viewBox="0 0 4.4 2.8"><path d="M0.500 0.500l1.700 1.700l1.700-1.700z" fill="#555"/></svg>
<span style="left:253px;top:54.5px;font-size:8.6px;color:#333;font-weight:400;transform:scaleX(0.8993);">$</span>
<svg style="left:262.3px;top:59.3px;" width="4.4" height="2.8" viewBox="0 0 4.4 2.8"><path d="M0.500 0.500l1.700 1.700l1.700-1.700z" fill="#555"/></svg>
<span style="left:269.5px;top:54.5px;font-size:8.6px;color:#333;font-weight:400;transform:scaleX(1.0188);">%</span>
<span style="left:283px;top:47.6px;font-size:21px;color:#222;font-weight:700;transform:scaleX(0.8556);">,</span>
<div style="left:290.5px;top:55px;width:0.5px;height:11px;background:#e0e0e0;"></div>
<span style="left:295px;top:51.8px;font-size:4.2px;color:#3f6a96;font-weight:700;transform:scaleX(0.9756);">←.0</span>
<span style="left:296px;top:56.3px;font-size:4.2px;color:#444;font-weight:700;transform:scaleX(1.1153);">.00</span>
<span style="left:307px;top:51.8px;font-size:4.2px;color:#444;font-weight:700;transform:scaleX(1.2011);">.00</span>
<span style="left:307px;top:56.3px;font-size:4.2px;color:#3f6a96;font-weight:700;transform:scaleX(0.9106);">→.0</span>
<span style="left:269.3px;top:70px;font-size:6.2px;color:#555;font-weight:400;transform:scaleX(0.8721);">Number</span>
<svg style="left:312.7px;top:73.7px;" width="5" height="5" viewBox="0 0 5 5"><path d="M0.400 3.600v-3.200h3.200 M2 2l2.300 2.300 M4.400 2.700v1.700h-1.700" fill="none" stroke="#666" stroke-width="0.600"/></svg>
<svg style="left:334.3px;top:37.8px;" width="15" height="12" viewBox="0 0 15 12"><rect x="0.500" y="0.500" width="14" height="10.500" fill="#f7c9c9" stroke="#8c6464" stroke-width="0.700"/><rect x="5.200" y="0.500" width="9.300" height="3.500" fill="#e58a8a"/><rect x="0.500" y="4" width="4.700" height="3.500" fill="#d9605e"/><rect x="5.200" y="4" width="4.700" height="3.500" fill="#cf4c4a"/><rect x="0.500" y="7.500" width="9.400" height="3.500" fill="#e58a8a"/><path d="M0.500 4h14M0.500 7.500h14M5.200 0.500v10.500M9.900 0.500v10.500" stroke="#f6e4e4" stroke-width="0.600"/><rect x="0.500" y="0.500" width="14" height="10.500" fill="none" stroke="#9a6a6a" stroke-width="0.700"/></svg>
<span style="left:327px;top:51px;font-size:6.4px;color:#444;font-weight:400;transform:scaleX(0.9473);">Conditional</span>
<span style="left:324px;top:59px;font-size:6.4px;color:#444;font-weight:400;transform:scaleX(0.9330);">Formatting</span>
<svg style="left:354.1px;top:64.1px;" width="4.4" height="2.8" viewBox="0 0 4.4 2.8"><path d="M0.500 0.500l1.700 1.700l1.700-1.700z" fill="#555"/></svg>
<svg style="left:366.8px;top:37.5px;" width="16" height="13" viewBox="0 0 16 13"><rect x="0.500" y="0.500" width="13.500" height="10.500" fill="#fff" stroke="#555" stroke-width="0.800"/><rect x="9" y="0.500" width="5" height="10.500" fill="#6aa9e0"/><path d="M0.500 4h13.500M0.500 7.500h13.500M4.800 0.500v10.500M9 0.500v10.500" stroke="#777" stroke-width="0.600"/><path d="M6.800 12.300l0.900-2.600l5.600-5.600l1.700 1.700l-5.600 5.600z" fill="#f3f3f3" stroke="#444" stroke-width="0.700"/></svg>
<span style="left:362px;top:51px;font-size:6.4px;color:#444;font-weight:400;transform:scaleX(0.8865);">Format as</span>
<span style="left:365px;top:59px;font-size:6.4px;color:#444;font-weight:400;transform:scaleX(0.9162);">Table</span>
<svg style="left:380.8px;top:64.1px;" width="4.4" height="2.8" viewBox="0 0 4.4 2.8"><path d="M0.500 0.500l1.700 1.700l1.700-1.700z" fill="#555"/></svg>
<svg style="left:392.8px;top:37.5px;" width="16" height="13" viewBox="0 0 16 13"><path d="M0.500 0.500h13.800v7.800l-2.700 2.700h-11.100z" fill="#fff" stroke="#555" stroke-width="0.800"/><rect x="2.800" y="2.300" width="9.500" height="6.200" fill="#5ba3e3"/><path d="M6.800 12.300l0.900-2.600l5.600-5.600l1.700 1.700l-5.600 5.600z" fill="#f3f3f3" stroke="#444" stroke-width="0.700"/></svg>
<span style="left:396px;top:51px;font-size:6.4px;color:#444;font-weight:400;transform:scaleX(0.8443);">Cell</span>
<span style="left:390px;top:59px;font-size:6.4px;color:#444;font-weight:400;transform:scaleX(0.8905);">Styles</span>
<svg style="left:407.3px;top:64.1px;" width="4.4" height="2.8" viewBox="0 0 4.4 2.8"><path d="M0.500 0.500l1.700 1.700l1.700-1.700z" fill="#555"/></svg>
<span style="left:361px;top:70px;font-size:6.2px;color:#555;font-weight:400;transform:scaleX(0.7414);">Styles</span>
<svg style="left:420.7px;top:35.8px;" width="9" height="7.2" viewBox="0 0 10 8"><rect x="0.500" y="0.500" width="9" height="7" fill="#fff" stroke="#4a6f96" stroke-width="0.800"/><path d="M0.500 3h9M0.500 5.500h9M3.500 0.500v7M6.500 0.500v7" stroke="#4a6f96" stroke-width="0.500"/><rect x="3.500" y="3" width="6" height="2.500" fill="#5b9bd5"/></svg>
<span style="left:431px;top:34px;font-size:6.4px;color:#444;font-weight:400;transform:scaleX(0.9384);">Insert</span>
<svg style="left:449.8px;top:39.3px;" width="4.4" height="2.8" viewBox="0 0 4.4 2.8"><path d="M0.500 0.500l1.700 1.700l1.700-1.700z" fill="#555"/></svg>
<svg style="left:420.7px;top:47.3px;" width="9" height="7.2" viewBox="0 0 10 8"><rect x="0.500" y="0.500" width="9" height="7" fill="#fff" stroke="#4a6f96" stroke-width="0.800"/><path d="M0.500 3h9M0.500 5.500h9M3.500 0.500v7" stroke="#4a6f96" stroke-width="0.500"/><path d="M5 2.500l3 3M8 2.500l-3 3" stroke="#444" stroke-width="0.800"/></svg>
<span style="left:431px;top:45.5px;font-size:6.4px;color:#444;font-weight:400;transform:scaleX(0.9467);">Delete</span>
<svg style="left:452.8px;top:50.8px;" width="4.4" height="2.8" viewBox="0 0 4.4 2.8"><path d="M0.500 0.500l1.700 1.700l1.700-1.700z" fill="#555"/></svg>
<svg style="left:420.7px;top:58.6px;" width="9" height="8.1" viewBox="0 0 10 9"><rect x="0.500" y="1.500" width="9" height="7" fill="#fff" stroke="#4a6f96" stroke-width="0.800"/><path d="M2.500 0.300v2.400M7.500 0.300v2.400" stroke="#444" stroke-width="0.700"/><rect x="3" y="3.800" width="4" height="3" fill="#bdd7ee" stroke="#4a6f96" stroke-width="0.500"/></svg>
<span style="left:431px;top:57px;font-size:6.4px;color:#444;font-weight:400;transform:scaleX(0.9383);">Format</span>
<svg style="left:451.3px;top:62.3px;" width="4.4" height="2.8" viewBox="0 0 4.4 2.8"><path d="M0.500 0.500l1.700 1.700l1.700-1.700z" fill="#555"/></svg>
<span style="left:434px;top:70px;font-size:6.2px;color:#555;font-weight:400;transform:scaleX(0.7628);">Cells</span>
<span style="left:470px;top:34px;font-size:9px;color:#444;font-weight:400;transform:scaleX(1.1294);">Σ</span>
<svg style="left:479.1px;top:39.3px;" width="4.4" height="2.8" viewBox="0 0 4.4 2.8"><path d="M0.500 0.500l1.700 1.700l1.700-1.700z" fill="#555"/></svg>
<svg style="left:468.5px;top:46.5px;" width="9" height="9" viewBox="0 0 9 9"><rect x="0.600" y="0.600" width="7.800" height="7.800" fill="#fff" stroke="#555" stroke-width="0.800"/><path d="M4.500 2v4.500M2.800 4.800l1.700 1.700l1.700-1.700" fill="none" stroke="#4a8ac8" stroke-width="0.800"/></svg>
<svg style="left:479.1px;top:50.3px;" width="4.4" height="2.8" viewBox="0 0 4.4 2.8"><path d="M0.500 0.500l1.700 1.700l1.700-1.700z" fill="#555"/></svg>
<svg style="left:468.5px;top:57.5px;" width="9" height="9" viewBox="0 0 9 9"><path d="M4.800 0.800l3.400 3.400l-4.200 4.200h-1.600l-1.800-1.800z" fill="#fff" stroke="#9a5fb0" stroke-width="0.800"/><path d="M2.700 2.900l3.400 3.400" stroke="#9a5fb0" stroke-width="0.700"/></svg>
<svg style="left:479.1px;top:61.3px;" width="4.4" height="2.8" viewBox="0 0 4.4 2.8"><path d="M0.500 0.500l1.700 1.700l1.700-1.700z" fill="#555"/></svg>
<span style="left:490px;top:34px;font-size:7.2px;color:#4a8ac8;font-weight:400;transform:scaleX(1.1466);">A</span>
<span style="left:490px;top:41.5px;font-size:7.2px;color:#444;font-weight:400;transform:scaleX(1.2527);">Z</span>
<svg style="left:496px;top:39.5px;" width="10" height="9" viewBox="0 0 10 9"><path d="M0.800 0.800h8.400l-3.200 3.800v3.600h-2v-3.600z" fill="none" stroke="#444" stroke-width="0.800"/></svg>
<span style="left:489px;top:51px;font-size:6.4px;color:#444;font-weight:400;transform:scaleX(0.9175);">Sort &amp;</span>
<span style="left:488px;top:59px;font-size:6.4px;color:#444;font-weight:400;transform:scaleX(0.9153);">Filter</span>
<svg style="left:502.8px;top:64.1px;" width="4.4" height="2.8" viewBox="0 0 4.4 2.8"><path d="M0.500 0.500l1.700 1.700l1.700-1.700z" fill="#555"/></svg>
<svg style="left:511.5px;top:34.5px;" width="17" height="17" viewBox="0 0 17 17"><circle cx="10.800" cy="6" r="4.900" fill="none" stroke="#555" stroke-width="0.900"/><path d="M7.300 9.600l-6 6.200" stroke="#555" stroke-width="1"/></svg>
<span style="left:511.5px;top:51px;font-size:6.4px;color:#444;font-weight:400;transform:scaleX(0.9467);">Find &amp;</span>
<span style="left:509.5px;top:59px;font-size:6.4px;color:#444;font-weight:400;transform:scaleX(0.9288);">Select</span>
<svg style="left:527.5px;top:64.1px;" width="4.4" height="2.8" viewBox="0 0 4.4 2.8"><path d="M0.500 0.500l1.700 1.700l1.700-1.700z" fill="#555"/></svg>
<span style="left:492px;top:70px;font-size:6.2px;color:#555;font-weight:400;transform:scaleX(0.8720);">Editing</span>
<svg style="left:544.5px;top:35px;" width="14" height="16" viewBox="0 0 14 16"><path d="M6.500 0.500h5.500l-3 5h3.500l-8.500 9.500l2.300-6.500h-3.800z" fill="#4a9be0" stroke="#2f7cc4" stroke-width="0.600"/></svg>
<span style="left:546px;top:51px;font-size:6.4px;color:#444;font-weight:400;transform:scaleX(0.8370);">Data</span>
<span style="left:541px;top:59px;font-size:6.4px;color:#444;font-weight:400;transform:scaleX(0.9035);">Analysis</span>
<span style="left:542px;top:70px;font-size:6.2px;color:#555;font-weight:400;transform:scaleX(0.8461);">Analysis</span>
<svg style="left:590px;top:75px;" width="7" height="5" viewBox="0 0 7 5"><path d="M1 3.800l2.500-2.600l2.500 2.600" fill="none" stroke="#444" stroke-width="0.900"/></svg>
</div></body></html>
